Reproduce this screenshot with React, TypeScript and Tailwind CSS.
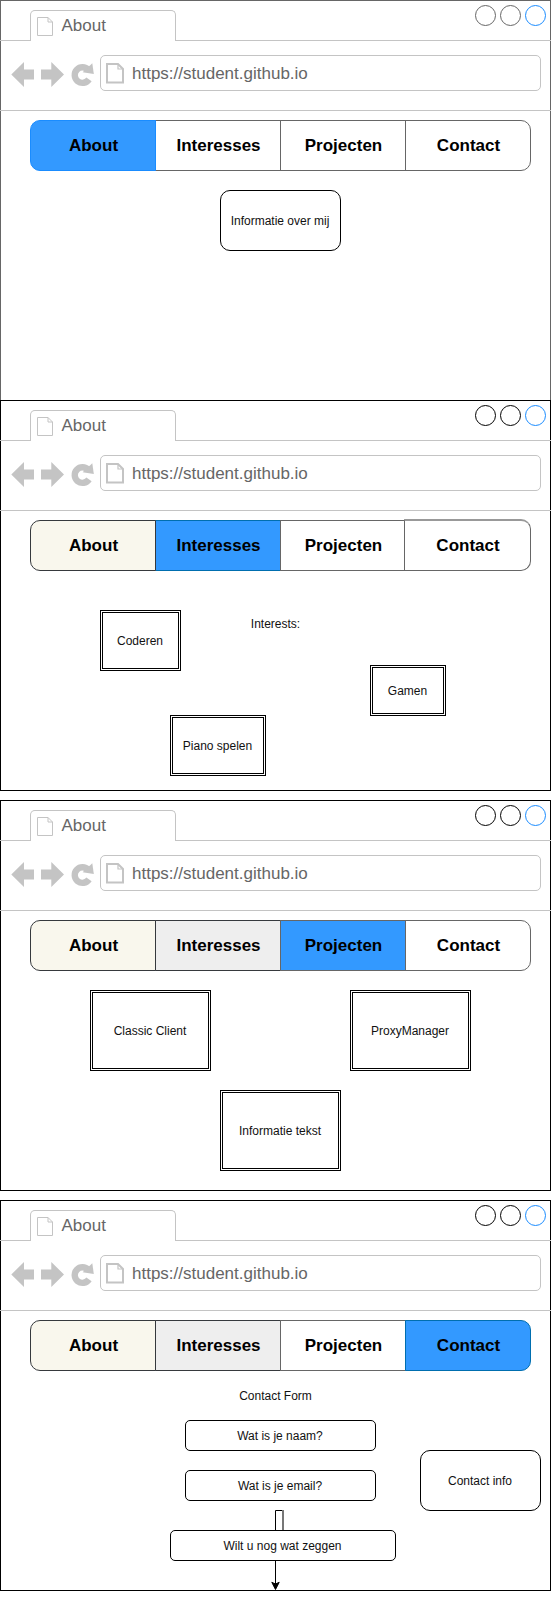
import type { ReactNode } from "react";
import clsx from "clsx";

function TabPageIcon() {
  return (
    <svg className="ml-[5px] mt-[5px] h-[21px] w-[18px]" viewBox="0 0 18 21" fill="none" stroke="#c4c4c4">
      <path d="M1.5 1.5H12L16.5 6V19.5H1.5Z" />
      <path d="M12 1.5V6H16.5" />
    </svg>
  );
}

function UrlPageIcon() {
  return (
    <svg className="ml-[5px] mt-[7px] h-[21px] w-[18px]" viewBox="0 0 18 21" fill="none" stroke="#c4c4c4">
      <path d="M1 1H12L17 6V19.5H1Z" strokeWidth="2" />
      <path d="M12 1V6H17" strokeWidth="1.2" />
    </svg>
  );
}

function Browser({
  tone = "dark",
  className,
  nav,
  children,
}: {
  tone?: "dark" | "soft";
  className: string;
  nav: ReactNode;
  children: ReactNode;
}) {
  const circle = clsx("size-[21px] rounded-full border", tone === "soft" ? "border-[#666]" : "border-black");
  return (
    <section
      className={clsx("flex w-[551px] flex-col border bg-white", tone === "soft" ? "border-[#666]" : "border-black", className)}
    >
      <div className="-mx-px flex h-10 items-end border-b border-[#c4c4c4] pl-[30px]">
        <div className="relative -mb-px flex h-[31px] w-[146px] shrink-0 rounded-t-[5px] border border-b-0 border-[#c4c4c4] bg-white">
          <TabPageIcon />
          <span className="ml-[7.5px] mt-[5px] text-[17px] leading-5 text-[#666]">About</span>
        </div>
        <div className="ml-auto mr-[5px] flex gap-1 self-start pt-1">
          <div className={circle} />
          <div className={circle} />
          <div className="size-[21px] rounded-full border border-[#1a8cff]" />
        </div>
      </div>
      <div className="-mx-px flex h-[70px] shrink-0 border-b border-[#c4c4c4] pt-[14px]">
        <svg width="100" height="36" viewBox="0 0 100 36" className="shrink-0" fill="#c4c4c4">
          <path d="M11.3 19.5L24 7V14.5H34V24.5H24V32Z" />
          <path d="M64 19.5L51.3 7V14.5H41V24.5H51.3V32Z" />
          <path d="M88.3 14.8A7.8 7.8 0 1 0 89 24.4" fill="none" stroke="#c4c4c4" strokeWidth="6.4" />
          <path d="M92.3 8.2L93.8 19L82.6 17.3Z" />
        </svg>
        <div className="flex h-9 w-[441px] rounded-[5px] border border-[#c4c4c4]">
          <UrlPageIcon />
          <span className="ml-2 mt-[8px] text-[17px] leading-5 text-[#666]">https://student.github.io</span>
        </div>
      </div>
      <nav className="ml-[29px] mt-[9px] flex h-[51px] w-[501px] shrink-0">{nav}</nav>
      <div className="relative flex-1">{children}</div>
    </section>
  );
}

function NavItem({ className, children }: { className: string; children: string }) {
  return (
    <div
      className={clsx(
        "relative -mr-px flex w-[126px] shrink-0 items-center justify-center border pl-px text-[17px] font-bold leading-5 text-black",
        className,
      )}
    >
      {children}
    </div>
  );
}

function Box({ className, children }: { className: string; children: string }) {
  return (
    <div
      className={clsx(
        "absolute flex items-center justify-center whitespace-nowrap border-black bg-white pr-px text-xs text-[#111]",
        className,
      )}
    >
      {children}
    </div>
  );
}

const label = "absolute -translate-x-1/2 whitespace-nowrap text-xs text-[#111]";

export default function App() {
  return (
    <main className="h-[1599px] w-[551px] bg-white font-['Liberation_Sans',Arial,sans-serif] text-black">
      <Browser
        tone="soft"
        className="h-[400px] border-b-0"
        nav={
          <>
            <NavItem className="z-10 rounded-l-[10px] border-[#1a8cff] bg-[#3399ff]">About</NavItem>
            <NavItem className="border-[#666]">Interesses</NavItem>
            <NavItem className="border-[#666]">Projecten</NavItem>
            <NavItem className="rounded-r-[10px] border-[#666]">Contact</NavItem>
          </>
        }
      >
        <Box className="left-[219px] top-[19px] h-[61px] w-[121px] rounded-[10px] border">Informatie over mij</Box>
      </Browser>

      <Browser
        className="h-[391px]"
        nav={
          <>
            <NavItem className="z-10 rounded-l-[10px] border-[#36393d] bg-[#f9f7ed]">About</NavItem>
            <NavItem className="border-[#006eaf] bg-[#3399ff]">Interesses</NavItem>
            <NavItem className="border-[#666]">Projecten</NavItem>
            <NavItem className="-ml-px -mt-px w-[127px] rounded-r-[10px] border-t-2 border-[#666] border-t-[#999] bg-white">
              Contact
            </NavItem>
          </>
        }
      >
        <Box className="left-[99px] top-[39px] h-[61px] w-[81px] border-3 border-double">Coderen</Box>
        <span className={clsx(label, "left-[274.5px] top-[45px]")}>Interests:</span>
        <Box className="left-[369px] top-[94px] h-[51px] w-[76px] border-3 border-double">Gamen</Box>
        <Box className="left-[169px] top-[144px] h-[61px] w-[96px] border-3 border-double">Piano spelen</Box>
      </Browser>

      <Browser
        className="mt-[9px] h-[391px]"
        nav={
          <>
            <NavItem className="z-10 rounded-l-[10px] border-[#36393d] bg-[#f9f7ed]">About</NavItem>
            <NavItem className="border-[#36393d] bg-[#eeeeee]">Interesses</NavItem>
            <NavItem className="border-[#666] bg-[#3399ff]">Projecten</NavItem>
            <NavItem className="rounded-r-[10px] border-[#666]">Contact</NavItem>
          </>
        }
      >
        <Box className="left-[89px] top-[19px] h-[81px] w-[121px] border-3 border-double">Classic Client</Box>
        <Box className="left-[349px] top-[19px] h-[81px] w-[121px] border-3 border-double">ProxyManager</Box>
        <Box className="left-[219px] top-[119px] h-[81px] w-[121px] border-3 border-double">Informatie tekst</Box>
      </Browser>

      <Browser
        className="mt-[9px] h-[391px]"
        nav={
          <>
            <NavItem className="z-10 rounded-l-[10px] border-[#36393d] bg-[#f9f7ed]">About</NavItem>
            <NavItem className="border-[#36393d] bg-[#eeeeee]">Interesses</NavItem>
            <NavItem className="border-[#666]">Projecten</NavItem>
            <NavItem className="rounded-r-[10px] border-[#006eaf] bg-[#3399ff]">Contact</NavItem>
          </>
        }
      >
        <span className={clsx(label, "left-[274.5px] top-[17px]")}>Contact Form</span>
        <svg className="absolute left-[264px] top-[139px]" width="26" height="81" viewBox="0 0 26 81" fill="none" stroke="#000">
          <path d="M10.5 76V0.5H18.5" />
          <path d="M18 0V30" stroke="#777" strokeWidth="2" />
          <path d="M10.5 79.5L6.8 72.3L10.5 74L14.2 72.3Z" fill="#000" />
        </svg>
        <Box className="left-[184px] top-[49px] h-[31px] w-[191px] rounded-[5px] border">Wat is je naam?</Box>
        <Box className="left-[184px] top-[99px] h-[31px] w-[191px] rounded-[5px] border">Wat is je email?</Box>
        <Box className="left-[419px] top-[79px] h-[61px] w-[121px] rounded-[10px] border">Contact info</Box>
        <Box className="left-[169px] top-[159px] h-[31px] w-[226px] rounded-[5px] border">Wilt u nog wat zeggen</Box>
      </Browser>
    </main>
  );
}
